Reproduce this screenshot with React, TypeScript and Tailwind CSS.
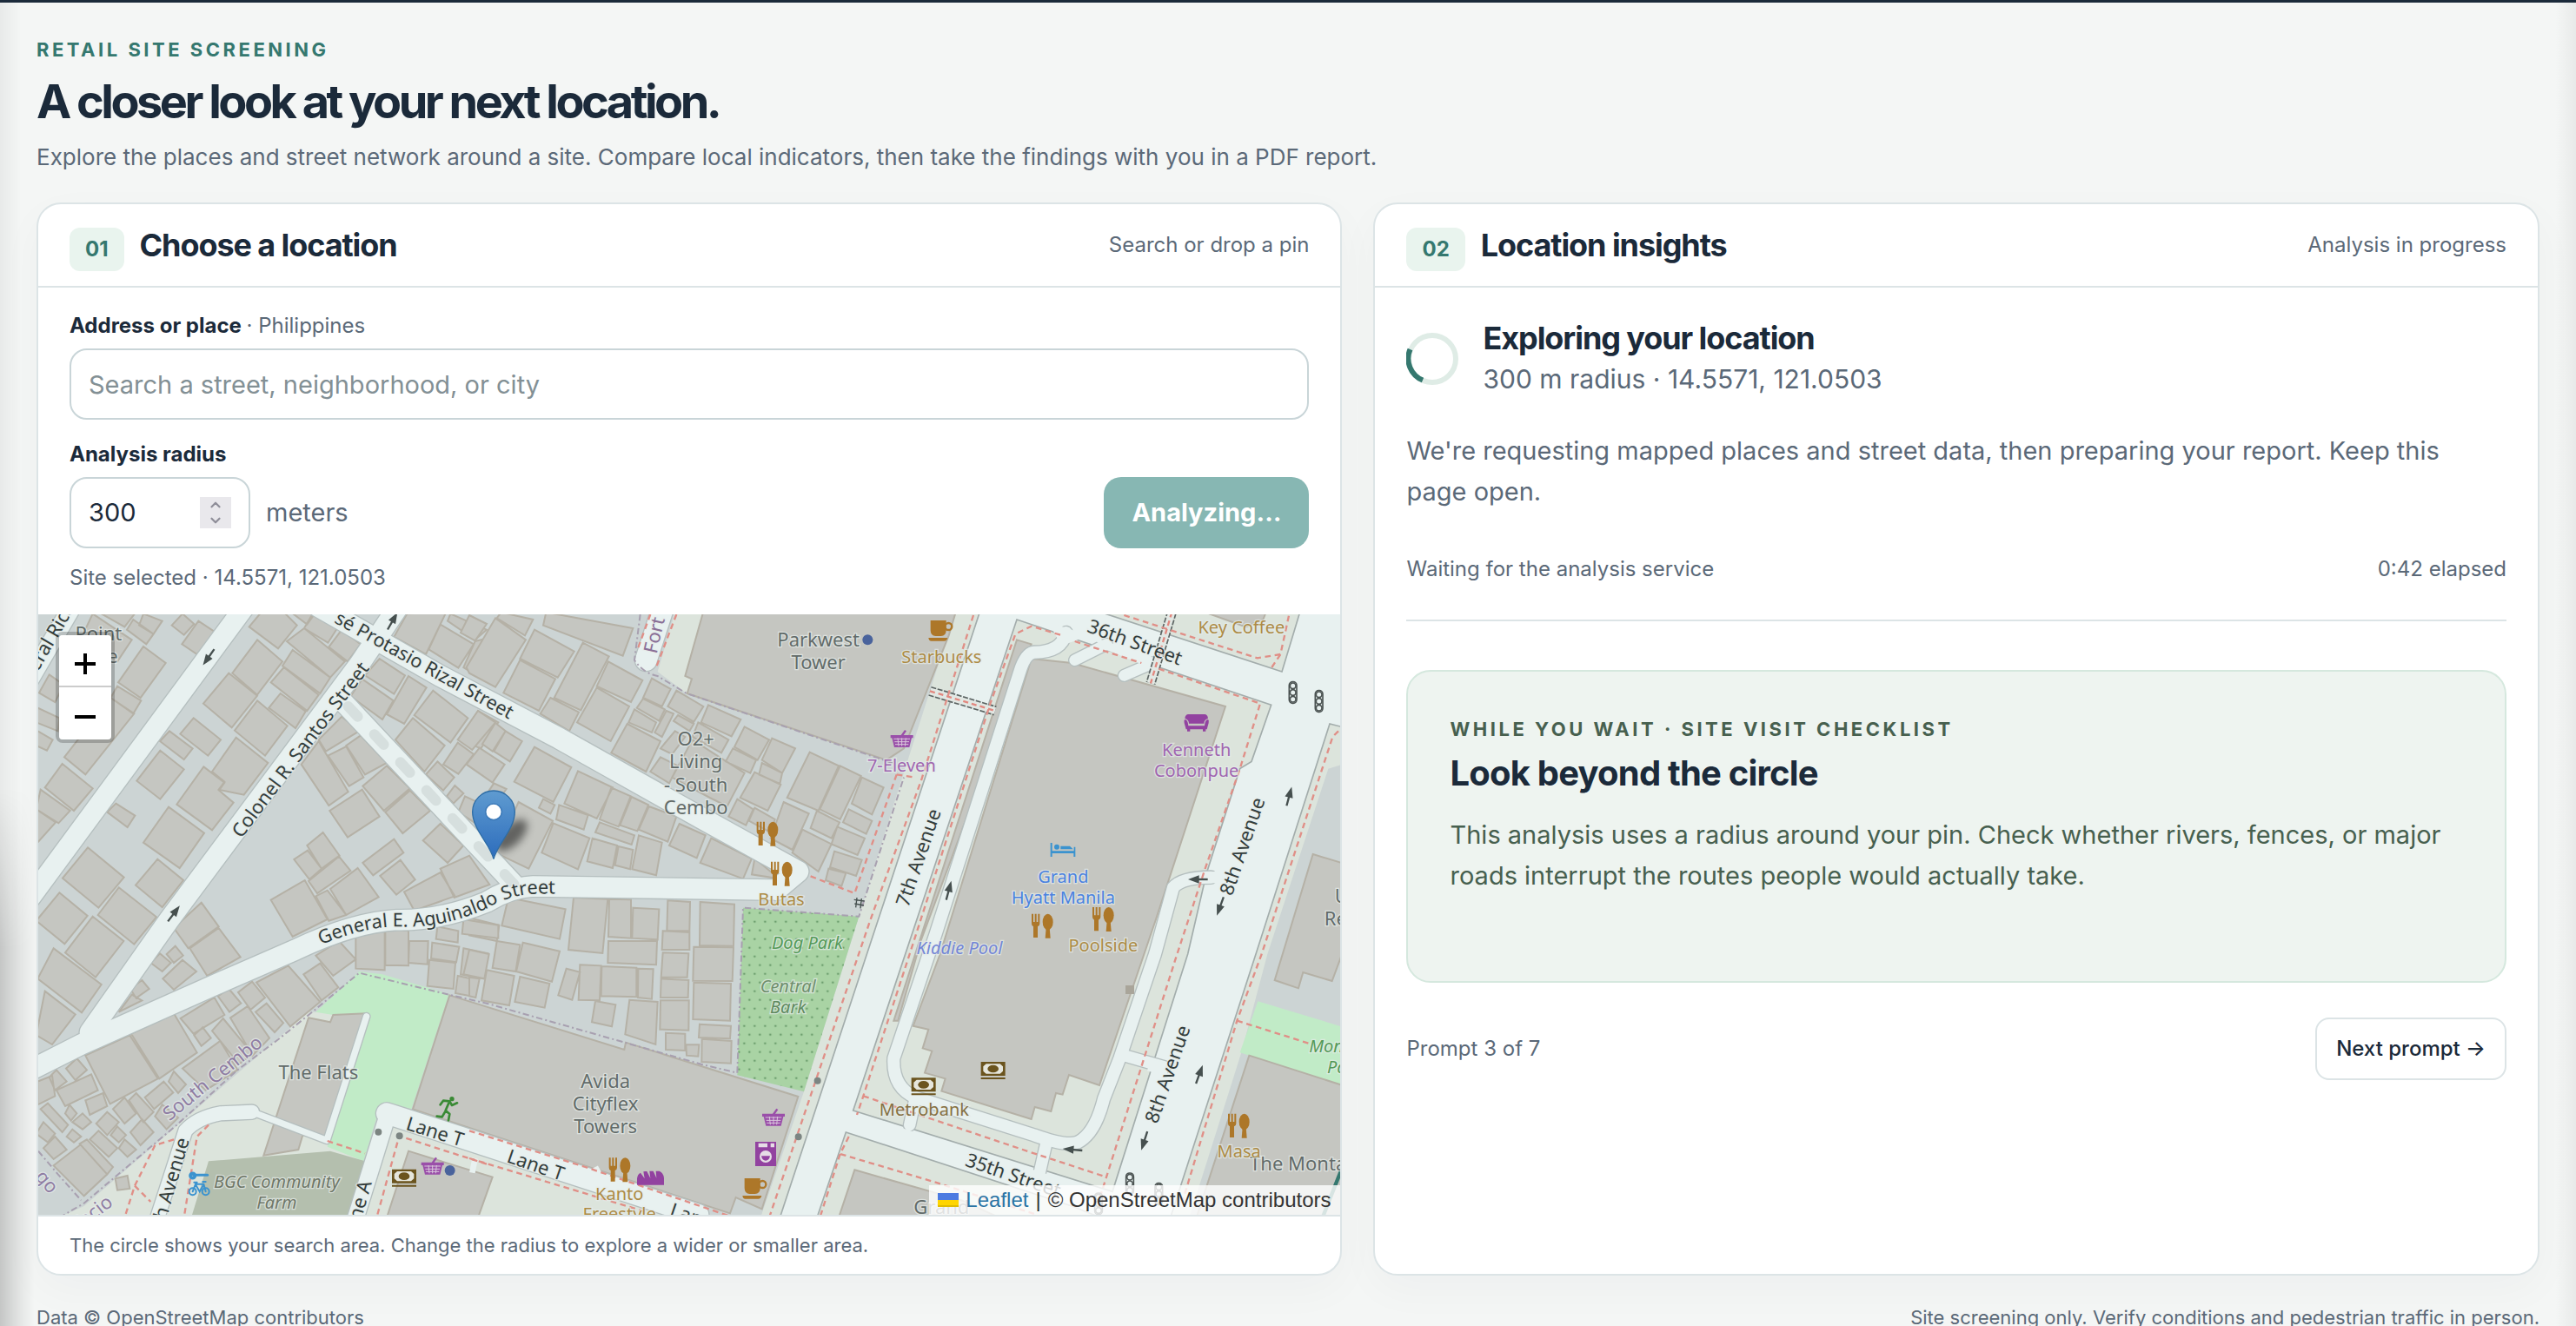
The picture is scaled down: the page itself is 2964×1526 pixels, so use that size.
import { useState, type ReactNode } from 'react';
import { ChevronDown, ChevronUp } from 'lucide-react';

// Map geometry is stored per tile, three units to the pixel.
const tiles = [
  {
    x: 0,
    y: 0,
    buildings:
      'M740,70L840,145L905,65L850,10L790,10zM885,20L940,62L970,20zM968,10L930,75L1012,125L1060,50zM930,75L870,120L1020,245L1070,190zM1060,80L1015,140L1080,190L1125,130zM768,115L855,190L768,305L682,230zM890,150L855,205L985,300L1020,245zM860,210L815,262L940,360L980,305zM848,300L808,350L900,420L935,362zM670,230L768,308L680,418L582,335zM768,325L872,412L795,515L690,428zM695,452L805,540L722,650L635,632L655,605L612,570zM548,385L642,460L598,515L502,440zM465,430L545,490L515,528L432,465zM433,497L515,562L433,665L352,602zM583,553L655,608L636,635L686,677L612,772L490,683zM462,692L585,782L500,903L375,815zM280,680L346,722L320,762L250,710zM424,872L513,945L440,1038L348,962zM183,832L308,935L220,1040L96,938zM290,970L420,1072L343,1166L218,1065zM85,988L182,1068L103,1165L5,1085zM200,1070L307,1155L210,1280L105,1195zM510,25L550,60L515,98L473,65zM565,50L625,90L560,165L508,130zM375,25L440,50L410,95L360,65zM340,45L410,95L385,130L318,80zM230,25L345,25L310,70zM375,138L452,195L365,315L288,262zM285,275L367,325L340,370L262,315zM200,25L335,115L285,190L160,110zM262,315L343,370L175,580L102,520zM95,543L200,628L135,705L35,625zM20,632L122,705L82,748L5,700zM5,700L72,745L5,820zM50,235L100,270L70,330L15,298zM10,350L85,385L80,430L5,400zM10,430L62,460L42,497L5,480zM1285,25L1420,20L1350,165L1240,105zM1435,25L1560,80L1520,115L1425,50zM1400,62L1515,130L1462,212L1360,148zM1520,120L1600,100L1560,260L1480,210zM1190,180L1278,238L1240,302L1140,238zM1130,250L1238,325L1200,390L1090,310zM1290,240L1352,280L1275,405L1215,372zM1375,290L1495,385L1435,470L1310,375zM1305,385L1415,480L1345,570L1245,460zM1530,360L1600,400L1540,490L1465,460zM1460,470L1515,510L1462,578L1410,545zM1390,535L1448,590L1410,635L1350,580zM1060,380L1120,430L1005,500L980,460zM980,465L1082,640L1015,687L920,545zM1075,483L1135,590L1085,620L1012,515zM1125,445L1215,540L1140,580L1075,480zM1215,550L1295,628L1205,705L1132,620zM1130,632L1190,725L1080,797L1018,705zM1295,635L1365,705L1270,783L1210,710zM1400,750L1480,825L1425,885L1340,808zM1450,618L1480,645L1445,680L1422,655zM1485,655L1560,690L1540,760L1462,710zM995,780L1052,860L990,905L940,825zM942,842L990,905L948,942L895,873zM1050,863L1090,912L975,990L945,948zM1115,903L1187,1003L1075,1065L1020,975zM932,945L1010,1080L890,1140L815,1013zM1010,980L1075,1065L1015,1085L970,1000zM1240,803L1273,850L1168,928L1132,885zM1262,875L1313,943L1248,995L1192,930zM1400,918L1450,1000L1310,1050L1275,985zM1400,905L1500,860L1570,960L1448,1005zM575,1022L635,1105L530,1180L480,1110zM635,1110L710,1210L595,1275L535,1180z',
  },
  {
    x: 1500,
    y: 0,
    buildings:
      'M0,30L60,60L20,118L-30,90zM90,40L195,115L90,278L0,230L-10,210zM110,20L220,45L192,100L95,40zM265,20L565,75L530,170L255,65zM225,80L362,155L305,245L175,180zM175,185L297,250L240,360L118,298zM392,125L482,172L385,358L293,315zM480,190L598,255L558,330L440,275zM440,280L552,345L488,465L372,400zM280,315L378,365L345,430L245,370zM630,248L695,285L665,345L600,315zM600,318L675,355L655,395L578,350zM570,355L645,400L630,435L550,400zM545,405L660,465L610,570L490,505zM715,290L808,345L775,398L685,345zM825,340L937,390L905,448L800,400zM680,360L705,370L665,450L640,435zM790,400L895,460L870,505L770,450zM720,375L775,405L760,430L705,395zM710,430L745,450L700,510L660,490zM950,415L1035,460L995,530L915,485zM910,490L990,530L970,575L885,535zM1045,455L1125,490L1080,575L1010,530zM1010,540L1080,575L1072,612L1000,580zM985,572L1075,615L1030,705L935,660zM770,460L950,575L890,690L830,660L700,590zM660,520L720,550L690,610L625,570zM1175,503L1275,550L1205,705L1097,660zM1280,550L1352,585L1280,735L1210,700zM1355,590L1430,625L1390,718L1320,680zM1310,700L1390,740L1370,785L1290,745zM1200,705L1278,745L1250,800L1178,765zM1085,675L1172,715L1115,840L1040,800zM1150,770L1250,820L1205,915L1115,850zM1270,760L1365,800L1340,858L1250,820zM1260,845L1355,875L1335,930L1245,900zM1240,905L1300,920L1285,965L1230,945zM985,695L1055,735L1040,780L965,740zM925,665L980,700L955,755L895,725zM30,360L90,400L10,495L-40,460zM90,402L125,430L80,500L45,475zM125,430L182,465L140,535L85,500zM35,488L122,545L80,608L-10,545zM225,485L352,555L290,675L155,605zM375,568L495,625L440,732L328,680zM490,625L557,655L515,760L450,735zM560,657L618,685L580,775L520,755zM620,690L715,725L685,812L585,770zM725,750L815,790L785,868L690,825zM835,800L975,870L945,940L797,885zM985,870L1070,940L975,925zM170,675L288,740L205,905L90,850zM310,685L410,720L395,770L300,735zM255,665L295,685L280,715L240,695zM290,748L415,800L375,907L250,850zM450,745L570,790L560,822L435,780zM425,800L510,825L495,903L407,880zM515,828L565,840L555,907L503,893zM585,790L665,815L645,928L562,907zM85,610L128,630L110,655L65,640zM135,1005L332,1045L312,1148L112,1102zM360,1005L478,1010L460,1197L342,1185zM483,1010L558,1012L558,1145L480,1140zM565,1040L655,1045L650,1150L562,1145zM685,1015L762,1020L760,1120L682,1120zM797,1020L915,1028L912,1172L795,1170zM0,1075L103,1100L95,1155L0,1135z',
  },
  {
    x: 0,
    y: 1080,
    buildings:
      'M65,100L230,225L162,322L10,205zM35,248L140,328L60,432L5,400zM432,118L470,150L440,180L400,150zM485,92L512,125L480,150L455,120zM510,140L558,180L480,243L442,205zM370,210L395,240L350,272L330,240zM335,260L370,280L290,320zM1050,75L1108,138L1030,195L970,125zM985,152L1048,235L990,280L928,190zM875,160L985,285L882,370L765,218zM750,215L795,270L745,312L702,252zM670,240L712,290L672,320L632,265zM620,270L655,330L548,395L503,342zM800,290L858,358L828,390L762,320zM735,300L810,410L752,470L675,340zM650,342L752,465L705,500L612,385zM580,373L608,410L575,437L550,400zM480,325L560,460L430,550L333,395zM328,400L425,550L260,637L175,470zM640,420L700,520L590,590L510,515zM480,525L522,570L495,600L462,560zM445,560L478,598L412,655L380,615zM75,590L195,535L218,590L105,645zM145,480L180,520L140,555L108,515zM75,520L110,560L70,590L50,545zM10,560L60,540L70,610L10,640zM235,600L250,645L190,675L175,625zM310,615L350,670L310,705L270,655zM350,600L410,665L375,700L325,625zM250,665L290,700L250,745L212,705zM120,640L145,670L125,695L105,670zM45,635L115,710L95,735L20,655zM30,700L70,740L45,770L5,740zM165,670L195,700L165,725L130,700zM370,690L410,735L365,780L330,735zM285,715L315,745L290,770L262,745zM220,730L285,790L255,820L190,760zM310,760L350,795L320,820L290,790zM70,750L110,795L65,828L30,790zM130,725L160,750L135,770L110,750zM158,778L250,880L170,955L65,850zM180,760L270,855L250,880L155,775zM320,885L328,930L285,935L278,895zM440,640L495,685L455,725L415,680zM1108,35L1208,35L1208,175L1108,170zM1210,30L1290,40L1290,160L1210,158zM1293,75L1358,75L1355,155L1290,150zM1390,25L1462,40L1460,80L1385,68zM1372,80L1465,95L1455,148L1368,135zM1362,140L1452,150L1445,240L1355,230zM1480,0L1600,20L1600,65L1475,50zM1480,100L1565,118L1550,205L1470,190zM1460,195L1530,210L1520,268L1452,255zM945,340L1020,355L1030,330L1140,325L1010,760L925,745L910,795L790,815zM1290,800L1580,890L1530,1030L1215,1030z',
  },
  {
    x: 1500,
    y: 1080,
    buildings:
      'M480,75L648,75L645,157L478,150zM668,40L760,45L760,105L665,105zM668,115L757,118L752,200L662,200zM662,205L757,210L755,270L660,270zM660,280L758,280L757,383L658,380zM775,95L912,97L908,213L772,212zM775,218L903,222L900,350L772,345zM795,362L903,368L900,412L792,408zM803,413L905,420L903,497L802,492zM95,75L175,88L160,180L80,168zM185,80L312,110L285,215L162,180zM175,198L277,222L260,305L157,285zM60,175L155,195L138,297L42,280zM0,105L68,120L52,205L-20,190zM0,200L35,205L22,270L0,265zM335,170L382,182L355,278L307,262zM382,157L455,160L450,280L377,278zM457,162L577,167L577,268L455,265zM583,170L635,172L630,275L582,270zM435,282L505,295L492,370L423,355zM553,278L650,285L643,432L538,397zM678,392L745,395L745,453L678,450zM748,433L793,433L790,473L750,470zM-68,262L535,450L540,425L1135,612L1010,1000L920,960L900,1015L0,720L-195,655z',
  },
  {
    x: 3000,
    y: 0,
    buildings:
      'M-690,10L-755,240L-732,250L-748,300L-60,530L0,490L155,100L182,10zM440,180L580,195L1110,345L870,1080L675,1653L570,1617L548,1685L525,1680L508,1743L452,1728L440,1770L130,1673L143,1630L72,1610L97,1535L65,1525L85,1460L32,1448L125,1200zM390,115L440,130L60,1150L-20,1430L-35,1430zM1412,855L1520,888L1520,1180L1478,1293L1378,1263L1362,1318L1280,1290zM1192,1550L1520,1655L1520,2110L1010,2110zM-170,1945L200,2050L330,2110L-225,2110zM1040,20L1250,20L1240,45L1180,70z',
  },
];

const roads = [
  { d: 'M135,-10L-25,265', w: 62 },
  { d: 'M740,-20L-20,1012', w: 68 },
  { d: 'M1255,0L1120,200L465,1080L190,1470', w: 70 },
  { d: 'M980,0L1400,240L1810,455L2300,730L2635,915L2560,978', w: 72 },
  { d: 'M1070,335L1660,965', w: 68 },
  { d: 'M-10,1598L160,1512L670,1285L900,1185Q1100,1090 1250,1082Q1400,1085 1560,1020Q1640,970 1720,966L2540,978', w: 70 },
  { d: 'M2170,0L2110,185', w: 74 },
  { d: 'M420,2120L520,1810Q560,1765 640,1750L750,1745', w: 48 },
  { d: 'M750,1745L1008,1843L1145,1415', w: 22 },
  { d: 'M1105,2120L1220,1750', w: 56 },
  { d: 'M1215,1750L1500,1842L2290,2100', w: 72 },
  { d: 'M3560,90Q3545,158 3450,158Q3420,160 3400,225L3110,1130L2965,1560Q2960,1660 3040,1695L3450,1825Q3560,1865 3600,1850Q3660,1820 3690,1700L3745,1560L3867,1200L3930,970Q3960,935 4060,935', w: 42 },
  { d: 'M3040,1695L3020,1790', w: 40 },
  { d: 'M3490,1860L3465,1970', w: 40 },
  { d: 'M3760,1550L3900,1590', w: 40 },
  { d: 'M3700,130L3590,185', w: 38 },
  { d: 'M3860,195L3760,238', w: 38 },
];

const avenues = [
  'M3265,10L2572,2110L2700,2110L2800,1815L3580,2070L3680,2110L3920,2110L4215,1200L4470,405L4530,420L4530,10L4370,10L4305,225L3650,10z',
];
// Kerbs of the blocks that are cut out of the avenue surface.
const blocks = [
  'M3390,45L2825,1740L3720,2020L3980,1200L4045,920L4160,560L4200,535L4268,340z',
];

const footways = [
  'M3240,30L3060,600L2885,1080L2535,2110',
  'M2975,580L2830,990L2675,930',
  'M2975,580L3040,590',
  'M3540,98L3440,68L3385,95L3300,330L3020,1200L2860,1690L2838,1755',
  'M3590,120L3820,195',
  'M3880,215L4230,335L4160,560L4040,905L3940,1210L3680,2030',
  'M3760,30L3900,75L4220,178L4300,165L4330,27',
  'M4270,210L4300,165',
  'M4500,430L4480,450L4235,1200L4150,1430L3960,2060',
  'M4150,1430L4410,1512',
  'M2860,1690L3440,1885L3700,1970',
  'M2810,1830L2780,1890L3100,1985L3460,2100',
  'M2780,1890L2710,2110',
  'M600,1790L560,1830L515,2110',
  'M480,1840L415,1860L345,2000L310,2110',
  'M345,2000L400,2055',
  'M1010,1845L1140,1888',
  'M1560,1925L1258,1828L1180,2110',
  'M1500,1905L2110,2090',
  'M1500,1810L1900,1935L2400,2105',
  'M2125,27L2080,150',
  'M2215,27L2145,210',
];

const boundaries = [
  'M2090,27L2070,185Q2100,230 2150,240L2250,300L2960,540',
  'M85,2110L170,2060L490,1790L700,1600L840,1495L970,1390L1120,1265L1430,1340L1560,1370L2300,1580L2425,1610L2445,1040L2845,1070L3000,590',
  'M12,1880L80,1960L160,2050',
];

function Fork({ x, y }: { x: number; y: number }) {
  return (
    <g transform={`translate(${x} ${y})`} fill="#ad7729">
      <path d="M-36,-42h6v28h5v-28h6v28h5v-28h6v34q0,8 -7,10v38h-15v-38q-6,-2 -6,-10z" />
      <ellipse cx="20" cy="-14" rx="18" ry="28" />
      <path d="M14,5h12l3,37h-18z" />
    </g>
  );
}

function Basket({ x, y }: { x: number; y: number }) {
  return (
    <g transform={`translate(${x} ${y})`}>
      <path d="M-39,-14h78v10h-5l-8,32h-52l-8,-32h-5zM-3,-14L10,-32l6,4L6,-14z" fill="#9a4fa9" />
      <path d="M-28,-1h56M-25,9h50M-23,18h46M-14,-4l3,28M0,-4v28M14,-4l-3,28" stroke="#d9c8dc" strokeWidth="3" />
    </g>
  );
}

function Cup({ x, y }: { x: number; y: number }) {
  return (
    <g transform={`translate(${x} ${y})`} fill="#ad7729">
      <path d="M-36,-34h54v34q0,20 -18,20h-18q-18,0 -18,-20zM-43,26h66q-2,11 -12,11h-44q-9,0 -10,-11z" />
      <circle cx="26" cy="-13" r="12" fill="none" stroke="#ad7729" strokeWidth="7" />
    </g>
  );
}

function Bank({ x, y }: { x: number; y: number }) {
  return (
    <g transform={`translate(${x} ${y})`}>
      <path d="M-42,-30h84v48h-84zM-42,24h84v6h-84z" fill="#6b541e" />
      <path d="M-34,-14l10,-9h48l10,9v16l-10,9h-48l-10,-9z" fill="#e6e6dc" />
      <ellipse cy="-6" rx="19" ry="13" fill="#6b541e" />
    </g>
  );
}

function Signal({ x, y }: { x: number; y: number }) {
  return (
    <g transform={`translate(${x} ${y})`} fill="#e8f1f0" stroke="#4c5453" strokeWidth="5">
      <rect x="-13" y="-37" width="26" height="74" rx="12" />
      <circle cy="-23" r="10" />
      <circle r="10" />
      <circle cy="23" r="10" />
    </g>
  );
}

function Arrow({ x, y, r }: { x: number; y: number; r: number }) {
  return (
    <g transform={`translate(${x} ${y}) rotate(${r})`}>
      <path d="M-34,0h40" stroke="#46504f" strokeWidth="7" />
      <path d="M34,0L-4,-14v28z" fill="#46504f" />
    </g>
  );
}

type LabelProps = { x: number; y: number; r?: number; size?: number; fill?: string; italic?: boolean; children: ReactNode };

function Label({ x, y, r = 0, size = 66, fill = '#626b69', italic = false, children }: LabelProps) {
  return (
    <text
      transform={`translate(${x} ${y}) rotate(${r})`}
      fontSize={size}
      fill={fill}
      fontStyle={italic ? 'italic' : 'normal'}
      textAnchor="middle"
      stroke="#e6ecea"
      strokeWidth="8"
      strokeOpacity=".7"
      paintOrder="stroke"
    >
      {children}
    </text>
  );
}

function StreetMap() {
  return (
    <svg viewBox="12 27 4497 2073" preserveAspectRatio="xMinYMin slice" className="block h-full w-full font-['Noto_Sans',sans-serif]" role="img" aria-label="Street map of the selected site">
      <defs>
        <pattern id="dots" width="36" height="60" patternUnits="userSpaceOnUse" x="2440" y="1025">
          <circle cx="9" cy="3" r="4" fill="#6d9f6e" />
          <circle cx="27" cy="33" r="4" fill="#6d9f6e" />
        </pattern>
        <linearGradient id="pin" x2="0" y2="1">
          <stop stopColor="#5f9bd0" />
          <stop offset="1" stopColor="#2c6cbc" />
        </linearGradient>
        <filter id="soft" x="-50%" y="-50%" width="200%" height="200%">
          <feGaussianBlur stdDeviation="14" />
        </filter>
        <path id="aguinaldo" d="M988,1168Q1140,1104 1260,1105Q1400,1112 1550,1047Q1640,995 1720,992L1900,990" />
      </defs>
      <rect width="4600" height="2200" fill="#ccd4d4" />
      {/* pedestrian ground */}
      <g fill="#dce4dc">
        <path d="M945,1400L170,2070L80,2110L1600,2110L2330,2110L1500,1830L1205,1715L1140,1915L1010,1860L1145,1405z" />
        <path d="M2210,20L2150,225L2250,300L2330,20zM3180,10L2985,620L2845,1070L2655,1675L2505,2110L2580,2110L3270,10z" />
        <path d="M3650,10L4305,225L4370,10zM2800,1815L2700,2110L3700,2110L3580,2070z" />
        <path d="M4470,405L4530,420L4530,540L4465,560L4255,1200L4165,1540L3985,2110L3910,2110z" />
      </g>
      <path d="M1120,1260L1200,1270L1430,1338L1300,1735L1210,1715L1190,1730L1135,1915L1010,1865L1150,1410L1030,1410L970,1400z" fill="#c1ebc7" />
      <path d="M600,1915L1020,1880L1140,1915L1085,2110L540,2110z" fill="#b4bfae" />
      <path d="M4222,1363L4520,1453L4520,1655L4160,1540z" fill="#c1ebc7" />
      <path d="M2445,1040L2845,1070L2655,1675L2425,1618z" fill="#a9d3a4" />
      <path d="M2445,1040L2845,1070L2655,1675L2425,1618z" fill="url(#dots)" />

      {avenues.map((d) => <path key={d} d={d} fill="#e8f1f0" stroke="#a3adac" strokeWidth="5" />)}
      {blocks.map((d) => <path key={d} d={d} fill="#dce4dc" stroke="#a3adac" strokeWidth="5" />)}
      {tiles.map((tile) => (
        <path key={tile.x + '-' + tile.y} d={tile.buildings} transform={`translate(${tile.x} ${tile.y})`} fill="#c5c6c1" stroke="#b5b1a6" strokeWidth="6" />
      ))}
      <g fill="none" strokeLinecap="round" strokeLinejoin="round">
        {roads.map((road) => <path key={road.d} d={road.d} stroke="#b5bfbf" strokeWidth={road.w + 8} />)}
        {roads.map((road) => <path key={road.d} d={road.d} stroke="#e8f1f0" strokeWidth={road.w} />)}
        <path d="M1082,345L1660,965" stroke="#d6dfde" strokeWidth="36" strokeDasharray="48 84" />
      </g>
      <g fill="#e8f1f0">
        <path d="M2828,1748L3700,2025L3650,2060L2805,1808z" />
        <path d="M3500,55L3640,100L3560,130L3530,110zM3640,100L3900,190L3860,215L3700,150zM4040,915h60v40h-60zM3850,1563l60,15v45l-70,-20z" />
      </g>
      <path d="M1520,1905l-10,50M1935,1935l12,22" stroke="#e8f1f0" strokeWidth="20" />
      {/* foot bridges */}
      {['M3090,292L3315,360', 'M3925,20L3852,265'].map((d) => (
        <g key={d} fill="none">
          <path d={d} stroke="#5c6463" strokeWidth="34" strokeDasharray="18 5" />
          <path d={d} stroke="#e2e8e4" strokeWidth="24" />
          <path d={d} stroke="#e2887f" strokeWidth="7" strokeDasharray="18 12" />
        </g>
      ))}
      <g fill="none">
        {footways.map((d) => <path key={d} d={d} stroke="#e08f87" strokeWidth="7" strokeDasharray="20 14" />)}
        {boundaries.map((d) => <path key={d} d={d} stroke="#a8a0b0" strokeWidth="6" strokeDasharray="22 10 6 10" />)}
        <path d="M4520,1920L4445,2110" stroke="#35786f" strokeWidth="13" />
      </g>
      <g fill="#7c8582">
        <circle cx="2702" cy="1637" r="12" />
        <circle cx="2636" cy="1831" r="12" />
        <circle cx="1186" cy="1814" r="12" />
        <circle cx="1259" cy="1828" r="12" />
        <rect x="3765" y="1308" width="30" height="30" fill="#a9a59a" />
      </g>

      <Arrow x={600} y={175} r={125} />
      <Arrow x={1235} y={50} r={-60} />
      <Arrow x={480} y={1060} r={-53} />
      <Arrow x={3155} y={980} r={-75} />
      <Arrow x={4330} y={655} r={-75} />
      <Arrow x={4020} y={1615} r={-70} />
      <Arrow x={4015} y={942} r={180} />
      <Arrow x={3582} y={1875} r={185} />
      <Arrow x={4092} y={1035} r={110} />
      <Arrow x={3830} y={1845} r={108} />
      <Signal x={4343} y={297} />
      <Signal x={4433} y={327} />
      <Signal x={3780} y={1993} />
      <Signal x={3880} y={2028} />
      <Signal x={3672} y={2062} />
      <path d="M2828,1012l36,5M2830,1026l32,6M2838,1005l-4,34M2854,1008l-4,34" stroke="#46504f" strokeWidth="4" />

      <g>
        <Label x={935} y={508} r={-53} fill="#333d3c">Colonel R. Santos Street</Label>
        <text fontSize="65" fill="#333d3c" stroke="#e6ecea" strokeWidth="8" strokeOpacity=".7" paintOrder="stroke">
          <textPath href="#aguinaldo">General E. Aguinaldo Street</textPath>
        </text>
        <Label x={1334} y={222} r={29} size={65} fill="#333d3c">sé Protasio Rizal Street</Label>
        <Label x={75} y={115} r={-60} fill="#333d3c">eral Rica</Label>
        <Label x={220} y={118}>Point</Label>
        <Label x={268} y={195}>e</Label>
        <Label x={3072} y={874} r={-71} fill="#333d3c">7th Avenue</Label>
        <Label x={4190} y={835} r={-71} fill="#333d3c">8th Avenue</Label>
        <Label x={3932} y={1622} r={-71} fill="#333d3c">8th Avenue</Label>
        <Label x={3790} y={145} r={20} fill="#333d3c">36th Street</Label>
        <Label x={3370} y={1985} r={19} fill="#333d3c">35th Street</Label>
        <Label x={1375} y={1835} r={17} fill="#333d3c">Lane T</Label>
        <Label x={1722} y={1950} r={19} fill="#333d3c">Lane T</Label>
        <Label x={2285} y={2135} r={19} fill="#333d3c">Lane T</Label>
        <Label x={485} y={2010} r={-74} fill="#333d3c">9th Avenue</Label>
        <Label x={1135} y={2090} r={-74} fill="#333d3c">Lane A</Label>
        <Label x={2172} y={55} r={-77} fill="#8a6f97">Fort Bo</Label>
        <Label x={628} y={1645} r={-39} fill="#8f7da3">South Cembo</Label>
        <Label x={215} y={2110} r={-38} fill="#8f7da3">facio</Label>
        <Label x={25} y={2000} r={50} fill="#8f7da3">go</Label>
        <Label x={2705} y={137}>Parkwest</Label>
        <Label x={2705} y={215}>Tower</Label>
        <Label x={2282} y={480}>O2+</Label>
        <Label x={2282} y={558}>Living</Label>
        <Label x={2282} y={638}>- South</Label>
        <Label x={2282} y={717}>Cembo</Label>
        <Label x={979} y={1632}>The Flats</Label>
        <Label x={1970} y={1662}>Avida</Label>
        <Label x={1970} y={1740}>Cityflex</Label>
        <Label x={1970} y={1819}>Towers</Label>
        <Label x={4400} y={1948}>The Montane</Label>
        <Label x={4540} y={1022}>Uni</Label>
        <Label x={4515} y={1102}>Resi</Label>
        <Label x={3130} y={2098}>Grand</Label>
        <Label x={3130} y={196} size={60} fill="#ad8b45">Starbucks</Label>
        <Label x={4165} y={94} size={60} fill="#ad8b45">Key Coffee</Label>
        <Label x={2577} y={1032} size={60} fill="#ad8b45">Butas</Label>
        <Label x={3688} y={1192} size={60} fill="#ad8b45">Poolside</Label>
        <Label x={4157} y={1902} size={60} fill="#ad8b45">Masa</Label>
        <Label x={2018} y={2048} size={60} fill="#ad8b45">Kanto</Label>
        <Label x={2018} y={2119} size={60} fill="#ad8b45">Freestyle</Label>
        <Label x={3070} y={1757} size={60} fill="#857042">Metrobank</Label>
        <Label x={2992} y={570} size={60} fill="#a065b0">7-Eleven</Label>
        <Label x={4010} y={517} size={60} fill="#a065b0">Kenneth</Label>
        <Label x={4010} y={589} size={60} fill="#a065b0">Cobonpue</Label>
        <Label x={3550} y={953} size={60} fill="#4a82e0">Grand</Label>
        <Label x={3550} y={1025} size={60} fill="#4a82e0">Hyatt Manila</Label>
        <Label x={3192} y={1201} size={60} fill="#7386d6" italic>Kiddie Pool</Label>
        <Label x={2667} y={1182} size={60} fill="#549a58" italic>Dog Park</Label>
        <Label x={2600} y={1332} size={60} fill="#6f8f6d" italic>Central</Label>
        <Label x={2600} y={1403} size={60} fill="#5f8a60" italic>Bark</Label>
        <Label x={835} y={2008} size={60} fill="#6f7768" italic>BGC Community</Label>
        <Label x={835} y={2078} size={60} fill="#6f7768" italic>Farm</Label>
        <Label x={4468} y={1540} size={60} fill="#549a58" italic>Mont</Label>
        <Label x={4495} y={1612} size={60} fill="#549a58" italic>Pa</Label>
      </g>

      <Fork x={2528} y={785} />
      <Fork x={2577} y={923} />
      <Fork x={3477} y={1103} />
      <Fork x={3687} y={1080} />
      <Fork x={2018} y={1945} />
      <Fork x={4155} y={1793} />
      <Cup x={3128} y={82} />
      <Cup x={2486} y={2008} />
      <Basket x={2993} y={458} />
      <Basket x={1373} y={1933} />
      <Basket x={2550} y={1765} />
      <Bank x={1275} y={1973} />
      <Bank x={3308} y={1602} />
      <Bank x={3068} y={1657} />
      <circle cx="2875" cy="115" r="18" fill="#4a639c" />
      <circle cx="1433" cy="1947" r="18" fill="#4a639c" />
      {/* furniture shop */}
      <path d="M3982,372h56q10,0 12,14q-14,4 -14,18h-52q0,-14 -14,-18q2,-14 12,-14zM3970,390q10,0 12,22h56q2,-22 12,-22q4,2 2,12l-6,22h-4v7h-10v-7h-44v7h-10v-7h-4l-6,-22q-2,-10 2,-12z" fill="#9242a0" />
      {/* hotel */}
      <path d="M3506,816h6v28h75v-14h5v34h-6v-12h-74v12h-6z" fill="#3b93cf" />
      <circle cx="3528" cy="830" r="9" fill="#3b93cf" />
      <path d="M3541,827h32l11,11h-43z" fill="#3b93cf" />
      {/* laundry */}
      <rect x="2487" y="1848" width="72" height="84" fill="#9242a0" />
      <path d="M2498,1853h31v14h-31zM2540,1853h13v14h-13z" fill="#e6dde6" />
      <circle cx="2523" cy="1899" r="21" fill="#e6dde6" />
      <path d="M2508,1897h30q-3,16 -15,16t-15,-16z" fill="#9242a0" />
      {/* bakery */}
      <path d="M2079,1997v-22q2,-16 12,-20l14,20l-4,-24q4,-2 12,-1l12,24l-3,-25h13l11,24l-2,-24h12q14,6 16,24v24z" fill="#9242a0" />
      {/* fitness */}
      <g fill="none" stroke="#3a8a35" strokeWidth="8" strokeLinecap="round" strokeLinejoin="round">
        <path d="M1400,1720l10,-14l22,2l8,14l18,-8M1430,1712l-12,28l14,12l-4,22M1418,1742l-12,20l-18,-2" />
        <circle cx="1440" cy="1700" r="4" />
      </g>
      {/* bicycle repair */}
      <g fill="none" stroke="#3b93cf" strokeWidth="6" strokeLinecap="round">
        <circle cx="545" cy="2020" r="12" />
        <circle cx="590" cy="2020" r="12" />
        <path d="M545,2020l10,-26h28l7,26M555,1996l14,24l14,-24M550,1988h10M580,1986h10" />
        <path d="M548,1963h48" strokeWidth="9" />
        <circle cx="545" cy="1965" r="8" strokeWidth="11" />
      </g>

      <ellipse cx="1645" cy="790" rx="70" ry="34" transform="rotate(-45 1645 790)" opacity=".5" filter="url(#soft)" />
      <path d="M1584,872C1572,820 1511,770 1511,709a73,73 0 0 1 146,0C1657,770 1596,820 1584,872z" fill="url(#pin)" stroke="#2e6da6" strokeWidth="4" />
      <circle cx="1584" cy="709" r="28" fill="#fff" stroke="#3f7cba" strokeWidth="5" />
    </svg>
  );
}

function StepHeader({ step, title, note }: { step: string; title: string; note: string }) {
  return (
    <header className="flex items-center justify-between border-b-2 border-[#dce4e6] px-9 py-[17px]">
      <div className="flex items-baseline gap-[18px]">
        <span className="rounded-xl bg-[#e9f4ee] px-[18px] text-2xl leading-[50px] font-bold text-[#35786f]">{step}</span>
        <h2 className="text-4xl leading-[60px] font-bold tracking-[-0.03em]">{title}</h2>
      </div>
      <span className="text-2xl leading-8 text-[#5b6978]">{note}</span>
    </header>
  );
}

export default function App() {
  const [query, setQuery] = useState('');
  const [radius, setRadius] = useState('300');
  const step = (by: number) => setRadius(String(Number(radius) + by));

  return (
    <div className="relative h-screen overflow-hidden border-t-[3px] border-[#1b2a3a] bg-[#f4f6f5] px-[42px] pt-[38px] font-[Inter,sans-serif] text-[#1b2a3a]">
      <p className="text-[22px] leading-8 font-bold tracking-[0.16em] text-[#35786f]">RETAIL SITE SCREENING</p>
      <h1 className="mt-[14px] text-[54px] leading-[60px] font-bold tracking-[-0.065em]">A closer look at your next location.</h1>
      <p className="mt-[14px] text-[26px] leading-10 text-[#5b6978]">
        Explore the places and street network around a site. Compare local indicators, then take the findings with you in a PDF report.
      </p>

      <main className="mt-8 grid grid-cols-[1.12fr_1fr] gap-9">
        <section className="overflow-hidden rounded-[28px] border-2 border-[#dce4e6] bg-white shadow-[0_16px_50px_rgba(27,42,58,0.03)]">
          <StepHeader step="01" title="Choose a location" note="Search or drop a pin" />
          <div className="px-9 pt-7 pb-[26px]">
            <label htmlFor="place" className="block text-2xl leading-8 font-bold">
              Address or place <span className="font-normal text-[#5b6978]">· Philippines</span>
            </label>
            <input
              id="place"
              value={query}
              onChange={(e) => setQuery(e.target.value)}
              placeholder="Search a street, neighborhood, or city"
              className="mt-[10px] block h-[82px] w-full rounded-[20px] border-2 border-[#c9d5d8] px-5 text-[29px] placeholder:text-[#839095]"
            />
            <label htmlFor="radius" className="mt-6 block text-2xl leading-8 font-bold">Analysis radius</label>
            <div className="mt-[10px] flex items-center justify-between">
              <div className="flex items-center gap-[18px]">
                <div className="flex h-[82px] w-[208px] items-center justify-between rounded-[20px] border-2 border-[#c9d5d8] px-5">
                  <input id="radius" inputMode="numeric" value={radius} onChange={(e) => setRadius(e.target.value)} className="w-24 text-[29px]" />
                  <div className="flex h-9 w-9 flex-col items-center justify-center bg-[#e9e8ec] text-[#8f8e99]">
                    <button aria-label="Increase radius" onClick={() => step(50)}><ChevronUp size={18} strokeWidth={3} /></button>
                    <button aria-label="Decrease radius" onClick={() => step(-50)}><ChevronDown size={18} strokeWidth={3} /></button>
                  </div>
                </div>
                <span className="text-[29px] text-[#5b6978]">meters</span>
              </div>
              <button className="h-[82px] rounded-[20px] bg-[#87b7b3] px-8 text-[29px] font-bold text-white">Analyzing…</button>
            </div>
            <p className="mt-[18px] text-2xl leading-8 text-[#5b6978]">Site selected · 14.5571, 121.0503</p>
          </div>
          <div className="relative h-[691px]">
            <StreetMap />
            <div className="absolute top-5 left-5 flex flex-col overflow-hidden rounded-lg border-4 border-black/20 bg-clip-padding text-black">
              <button aria-label="Zoom in" className="flex h-15 w-15 items-center justify-center border-b-2 border-[#ccc] bg-white pt-2">
                <svg viewBox="0 0 24 24" className="h-6 w-6"><path d="M0 12h24M12 0v24" stroke="#000" strokeWidth="4" /></svg>
              </button>
              <button aria-label="Zoom out" className="flex h-15 w-15 items-center justify-center bg-white pt-2">
                <svg viewBox="0 0 24 24" className="h-6 w-6"><path d="M0 12h24" stroke="#000" strokeWidth="4" /></svg>
              </button>
            </div>
            <div className="absolute right-0 bottom-0 flex items-center gap-2 bg-white/80 pr-[11px] pl-[10px] font-['Liberation_Sans',sans-serif] text-2xl leading-[34px] text-[#333]">
              <svg viewBox="0 0 12 8" className="h-4 w-6"><path fill="#4c7be1" d="M0 0h12v4H0z" /><path fill="#ffd500" d="M0 4h12v3H0z" /><path fill="#e0bc00" d="M0 7h12v1H0z" /></svg>
              <a href="#leaflet" className="text-[#2a74a5]">Leaflet</a>
              <span>|</span>
              <span>© OpenStreetMap contributors</span>
            </div>
          </div>
          <p className="border-t-2 border-[#dce4e6] px-9 py-4 text-[22px] leading-[34px] text-[#5b6978]">
            The circle shows your search area. Change the radius to explore a wider or smaller area.
          </p>
        </section>

        <section className="overflow-hidden rounded-[28px] border-2 border-[#dce4e6] bg-white shadow-[0_16px_50px_rgba(27,42,58,0.03)]">
          <StepHeader step="02" title="Location insights" note="Analysis in progress" />
          <div className="px-9 pt-9">
            <div className="flex items-center gap-7">
              <svg viewBox="0 0 60 60" className="h-15 w-15" fill="none" strokeWidth="6">
                <circle cx="30" cy="30" r="27" stroke="#dfece6" />
                <path d="M4.5 19A27 27 0 0 0 19 54.5" stroke="#35786f" />
              </svg>
              <div>
                <h3 className="text-4xl leading-[44px] font-bold tracking-[-0.03em]">Exploring your location</h3>
                <p className="mt-[2px] text-[30px] leading-[46px] text-[#5b6978]">300 m radius · 14.5571, 121.0503</p>
              </div>
            </div>
            <p className="mt-9 pr-10 text-[29px] leading-[47px] text-[#5b6978]">
              We're requesting mapped places and street data, then preparing your report. Keep this page open.
            </p>
            <div className="mt-[50px] flex justify-between border-b-2 border-[#dce4e6] pb-[42px] text-2xl leading-8 text-[#5b6978]">
              <span>Waiting for the analysis service</span>
              <span>0:42 elapsed</span>
            </div>
            <article className="mt-14 min-h-[360px] rounded-[28px] border-2 border-[#d5e8de] bg-[#eef4f0] px-12 py-[50px]">
              <p className="text-[22px] leading-8 font-bold tracking-[0.16em] text-[#47604f]">WHILE YOU WAIT · SITE VISIT CHECKLIST</p>
              <h3 className="mt-[10px] text-[40px] leading-[50px] font-bold tracking-[-0.02em]">Look beyond the circle</h3>
              <p className="mt-[22px] text-[29px] leading-[47px] text-[#47604f]">
                This analysis uses a radius around your pin. Check whether rivers, fences, or major roads interrupt the routes people would actually take.
              </p>
            </article>
            <div className="mt-10 flex items-center justify-between text-2xl">
              <span className="text-[#5b6978]">Prompt 3 of 7</span>
              <button className="h-[72px] rounded-2xl border-2 border-[#dce4e6] bg-white px-[22px] font-medium">Next prompt →</button>
            </div>
          </div>
        </section>
      </main>

      <footer className="mt-8 flex justify-between text-[22px] leading-8 text-[#5b6978]">
        <span>Data © OpenStreetMap contributors</span>
        <span>Site screening only. Verify conditions and pedestrian traffic in person.</span>
      </footer>
      <div className="pointer-events-none absolute inset-y-0 left-0 w-6 bg-linear-to-r from-black/5 to-transparent" />
      <div className="pointer-events-none absolute bottom-0 left-0 h-[620px] w-10 bg-linear-to-r from-black/15 to-transparent [mask-image:linear-gradient(to_bottom,transparent,black_30%)]" />
      <div className="pointer-events-none absolute inset-y-0 right-0 w-6 bg-linear-to-l from-black/5 to-transparent" />
    </div>
  );
}
